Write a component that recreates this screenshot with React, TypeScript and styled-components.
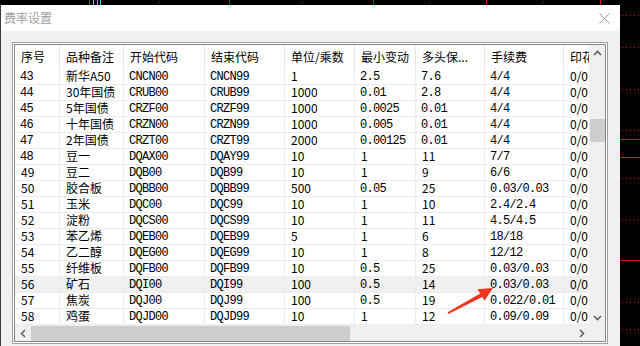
import styled, { createGlobalStyle } from 'styled-components'

const GlobalStyle = createGlobalStyle`
  html, body {
    margin: 0;
    padding: 0;
    background: #000;
  }
  body {
    font-family: "Noto Sans CJK SC", "Liberation Sans", sans-serif;
  }
  svg {
    display: block;
  }
`

const COLUMN_WIDTHS = [45, 64, 81, 80, 70, 61, 69, 79, 70]
const gridColumns = COLUMN_WIDTHS.map((w) => `${w}px`).join(' ')

const HEADERS = ['序号', '品种备注', '开始代码', '结束代码', '单位/乘数', '最小变动', '多头保...', '手续费', '印花税']

type FeeRow = [string, string, string, string, string, string, string, string, string]

const ROWS: FeeRow[] = [
  ['43', '新华A50', 'CNCN00', 'CNCN99', '1', '2.5', '7.6', '4/4', '0/0'],
  ['44', '30年国债', 'CRUB00', 'CRUB99', '1000', '0.01', '2.8', '4/4', '0/0'],
  ['45', '5年国债', 'CRZF00', 'CRZF99', '1000', '0.0025', '0.01', '4/4', '0/0'],
  ['46', '十年国债', 'CRZN00', 'CRZN99', '1000', '0.005', '0.01', '4/4', '0/0'],
  ['47', '2年国债', 'CRZT00', 'CRZT99', '2000', '0.00125', '0.01', '4/4', '0/0'],
  ['48', '豆一', 'DQAX00', 'DQAY99', '10', '1', '11', '7/7', '0/0'],
  ['49', '豆二', 'DQB00', 'DQB99', '10', '1', '9', '6/6', '0/0'],
  ['50', '胶合板', 'DQBB00', 'DQBB99', '500', '0.05', '25', '0.03/0.03', '0/0'],
  ['51', '玉米', 'DQC00', 'DQC99', '10', '1', '10', '2.4/2.4', '0/0'],
  ['52', '淀粉', 'DQCS00', 'DQCS99', '10', '1', '11', '4.5/4.5', '0/0'],
  ['53', '苯乙烯', 'DQEB00', 'DQEB99', '5', '1', '6', '18/18', '0/0'],
  ['54', '乙二醇', 'DQEG00', 'DQEG99', '10', '1', '8', '12/12', '0/0'],
  ['55', '纤维板', 'DQFB00', 'DQFB99', '10', '0.5', '25', '0.03/0.03', '0/0'],
  ['56', '矿石', 'DQI00', 'DQI99', '100', '0.5', '14', '0.03/0.03', '0/0'],
  ['57', '焦炭', 'DQJ00', 'DQJ99', '100', '0.5', '19', '0.022/0.01', '0/0'],
  ['58', '鸡蛋', 'DQJD00', 'DQJD99', '10', '1', '12', '0.09/0.09', '0/0'],
]

const ACTIVE_ROW = '56'

// cells the original draws in the narrow bitmap face rather than the sans one
const isMono = (col: number, value: string, seq: number) => {
  if (col === 2 || col === 3) return true
  if (col === 0) return seq <= 48
  if (col === 8) return false
  return value.includes('.') || value.includes('/')
}

const Chevron = ({ dir }: { dir: 'up' | 'down' | 'left' | 'right' }) => {
  const rotate = { up: 0, right: 90, down: 180, left: 270 }[dir]
  return (
    <svg width="9" height="9" viewBox="0 0 9 9" style={{ transform: `rotate(${rotate}deg)` }}>
      <polyline points="1,6 4.5,2.5 8,6" fill="none" stroke="#606060" strokeWidth="1.6" />
    </svg>
  )
}

const TopChart = () => (
  <svg width="640" height="5" viewBox="0 0 640 5">
    {[89, 229, 373, 486, 600].map((x) => (
      <line key={x} x1={x + 0.5} y1="0" x2={x + 0.5} y2="5" stroke="#e01010" />
    ))}
    {[93, 97, 100].map((x) => (
      <line key={x} x1={x + 0.5} y1="0" x2={x + 0.5} y2="5" stroke="#40d0e0" />
    ))}
    {[159, 302, 429, 543].map((x) => (
      <rect key={x} x={x} y="2" width="1" height="1" fill="#c01010" />
    ))}
  </svg>
)

const SideChart = () => (
  <svg width="20" height="341" viewBox="0 0 20 341">
    {[15, 47, 89, 130, 178, 219, 302, 329].map((y) => (
      <line key={y} x1="2" y1={y - 5 + 0.5} x2="20" y2={y - 5 + 0.5} stroke="#d01010" strokeDasharray="1 3" />
    ))}
    {[139, 157, 260].map((y) => (
      <line key={y} x1="0" y1={y - 5 + 0.5} x2="20" y2={y - 5 + 0.5} stroke="#f01010" />
    ))}
  </svg>
)

const App = () => {
  return (
    <Page>
      <GlobalStyle />
      <TopChart />
      <Main>
        <Dialog>
          <TitleBar>
            <Title>费率设置</Title>
            <svg width="11" height="11" viewBox="0 0 11 11">
              <line x1="0.5" y1="0.5" x2="10.5" y2="10.5" stroke="#9a9a9a" />
              <line x1="10.5" y1="0.5" x2="0.5" y2="10.5" stroke="#9a9a9a" />
            </svg>
          </TitleBar>
          <Body>
            <Frame>
              <ListBox>
                <Viewport>
                  <HeaderRow>
                    {HEADERS.map((h) => (
                      <HeaderCell key={h}>{h}</HeaderCell>
                    ))}
                  </HeaderRow>
                  {ROWS.map((row) => (
                    <DataRow key={row[0]} $active={row[0] === ACTIVE_ROW}>
                      {row.map((value, col) => (
                        <Cell key={col} $mono={isMono(col, value, Number(row[0]))}>
                          {value}
                        </Cell>
                      ))}
                    </DataRow>
                  ))}
                </Viewport>
                <VScroll>
                  <ScrollButton>
                    <Chevron dir="up" />
                  </ScrollButton>
                  <VTrack>
                    <VThumb />
                  </VTrack>
                  <ScrollButton>
                    <Chevron dir="down" />
                  </ScrollButton>
                </VScroll>
                <HScroll>
                  <ScrollButton>
                    <Chevron dir="left" />
                  </ScrollButton>
                  <HTrack>
                    <HThumb />
                  </HTrack>
                  <ScrollButton>
                    <Chevron dir="right" />
                  </ScrollButton>
                </HScroll>
                <Corner />
              </ListBox>
            </Frame>
          </Body>
        </Dialog>
        <SideChart />
      </Main>
      <Pointer width="60" height="36" viewBox="0 0 60 36">
        <polygon
          points="53,5 44.5,17.8 42.2,14 8.4,30.9 7.6,29.3 40.2,10.6 37.4,6.2"
          fill="#f0361e"
        />
      </Pointer>
    </Page>
  )
}

const Page = styled.div`
  position: relative;
  width: 640px;
  height: 346px;
  overflow: hidden;
  background: #000;
  display: flex;
  flex-direction: column;
`

const Main = styled.div`
  display: flex;
  height: 341px;
  flex: none;
`

const Dialog = styled.div`
  width: 620px;
  height: 341px;
  box-sizing: border-box;
  display: flex;
  flex-direction: column;
  border-left: 1px solid #3a3a3a;
  background: #f0f0f0;
  overflow: hidden;
`

const TitleBar = styled.div`
  height: 26px;
  flex: none;
  box-sizing: border-box;
  display: flex;
  align-items: center;
  justify-content: space-between;
  padding: 0 10px 0 3px;
  background: #fff;
`

const Title = styled.span`
  font-size: 12px;
  line-height: 14px;
  color: #a0a0a0;
`

const Body = styled.div`
  flex: none;
  padding: 11px 12px 2px 11px;
`

const Frame = styled.div`
  border: 1px solid #a0a0a0;
  padding: 1px;
  background: #fff;
`

const ListBox = styled.div`
  display: grid;
  grid-template-columns: 574px 16px;
  grid-template-rows: 280px 16px;
  height: 296px;
  border: 1px solid #828790;
  background: #fff;
`

const Viewport = styled.div`
  height: 280px;
  min-width: 0;
  min-height: 0;
  overflow: hidden;
  background: #fff;
`

const HeaderRow = styled.div`
  display: grid;
  grid-template-columns: ${gridColumns};
  height: 24px;
`

const HeaderCell = styled.div`
  box-sizing: border-box;
  padding-left: 6px;
  border-right: 1px solid #e5e5e5;
  font-size: 12px;
  line-height: 24px;
  color: #000;
  white-space: nowrap;
`

const DataRow = styled.div<{ $active: boolean }>`
  display: grid;
  grid-template-columns: ${gridColumns};
  height: 16px;
  background: ${(props) => (props.$active ? '#f0f0f0' : '#fff')};
`

const Cell = styled.div<{ $mono: boolean }>`
  box-sizing: border-box;
  height: 16px;
  padding: ${(props) => (props.$mono ? '1px 0 0 5px' : '0 0 0 6px')};
  border-right: 1px solid #ececec;
  border-bottom: 1px solid #ececec;
  font-family: ${(props) =>
    props.$mono ? '"Liberation Mono", monospace' : '"Noto Sans CJK SC", "Liberation Sans", sans-serif'};
  font-size: 12px;
  letter-spacing: ${(props) => (props.$mono ? '-0.7px' : '0')};
  line-height: ${(props) => (props.$mono ? '15px' : '14px')};
  color: #000;
  white-space: nowrap;
`

const VScroll = styled.div`
  height: 280px;
  display: flex;
  flex-direction: column;
  background: #f0f0f0;
`

const HScroll = styled.div`
  height: 16px;
  min-width: 0;
  display: flex;
  background: #f0f0f0;
`

const ScrollButton = styled.div`
  width: 16px;
  height: 16px;
  flex: none;
  display: flex;
  align-items: center;
  justify-content: center;
`

const VTrack = styled.div`
  flex: 1;
`

const VThumb = styled.div`
  margin: 58px 0 0 1px;
  height: 23px;
  background: #cdcdcd;
`

const HTrack = styled.div`
  flex: 1;
  display: flex;
  align-items: center;
`

const HThumb = styled.div`
  width: 319px;
  height: 15px;
  background: #cdcdcd;
`

const Corner = styled.div`
  background: #f0f0f0;
`

const Pointer = styled.svg`
  position: absolute;
  left: 440px;
  top: 283px;
`

export default App
